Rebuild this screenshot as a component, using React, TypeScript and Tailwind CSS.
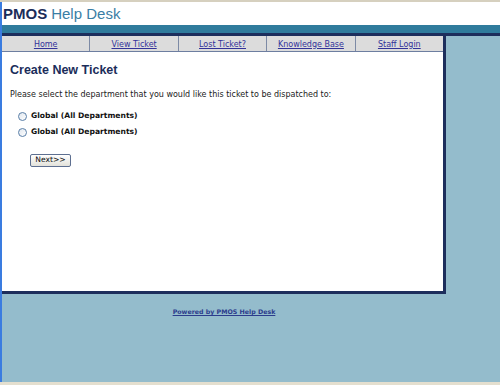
export default function App() {
  const nav = ["Home", "View Ticket", "Lost Ticket?", "Knowledge Base", "Staff Login"];

  return (
    <div className="w-[500px] h-[385px] flex flex-col bg-[#94bccc] overflow-hidden font-['DejaVu_Sans',sans-serif]">
      <div className="h-[2px] bg-[#d6d0bf]" />
      <div className="flex-1 flex flex-col border-l-2 border-[#3a7ce0]">
        <div className="h-[23px] bg-white flex items-center pl-[1px] font-['Liberation_Sans',sans-serif] text-[15px] leading-none">
          <span className="font-bold text-[#1b2d5a]">PMOS</span>
          <span className="ml-[4px] text-[#3a7ea5]">Help Desk</span>
        </div>
        <div className="h-[8px] bg-[#2f7b9c]" />
        <div className="h-[3px] bg-[#1d2e5c]" />
        <div className="flex-1 flex">
          <div className="w-[444px] flex flex-col">
            <div className="border-r-[3px] border-b-[3px] border-[#1d2e5c] bg-white">
              <div className="flex h-[16px] bg-[#dcdcdc] border-b border-[#6d7ea0]">
                {nav.map((n, i) => (
                  <div
                    key={n}
                    className={`flex-1 flex items-center justify-center pt-[2px] text-[8px] text-[#33339a] underline ${i > 0 ? "border-l border-[#7d8aa5]" : ""}`}
                  >
                    {n}
                  </div>
                ))}
              </div>
              <div className="h-[239px] px-[8px] pt-[12px]">
                <h1 className="font-['Liberation_Sans',sans-serif] font-bold text-[12.5px] text-[#1b2d5a] leading-none">
                  Create New Ticket
                </h1>
                <p className="mt-[14px] text-[8px] text-[#222] leading-none">
                  Please select the department that you would like this ticket to be dispatched to:
                </p>
                <div className="mt-[13px] flex flex-col gap-[7px] pl-[8px]">
                  {[0, 1].map((i) => (
                    <label key={i} className="flex items-center gap-[4px] text-[7.6px] font-bold text-[#111] leading-none">
                      <span className="w-[9px] h-[9px] rounded-full border border-[#5a7fa8] bg-gradient-to-br from-[#dfe6ee] to-white" />
                      Global (All Departments)
                    </label>
                  ))}
                </div>
                <button className="mt-[17px] ml-[20px] h-[13px] w-[41px] rounded-[2px] border border-[#5d6f90] bg-gradient-to-b from-white to-[#e3e2da] text-[7.6px] text-[#111] leading-none">
                  Next&gt;&gt;
                </button>
              </div>
            </div>
            <div className="flex justify-center pt-[13px]">
              <span className="text-[6.3px] font-bold text-[#2c3c8c] underline">Powered by PMOS Help Desk</span>
            </div>
          </div>
          <div className="flex-1" />
        </div>
      </div>
      <div className="h-[3px] bg-[#e4dfcf]" />
    </div>
  );
}
